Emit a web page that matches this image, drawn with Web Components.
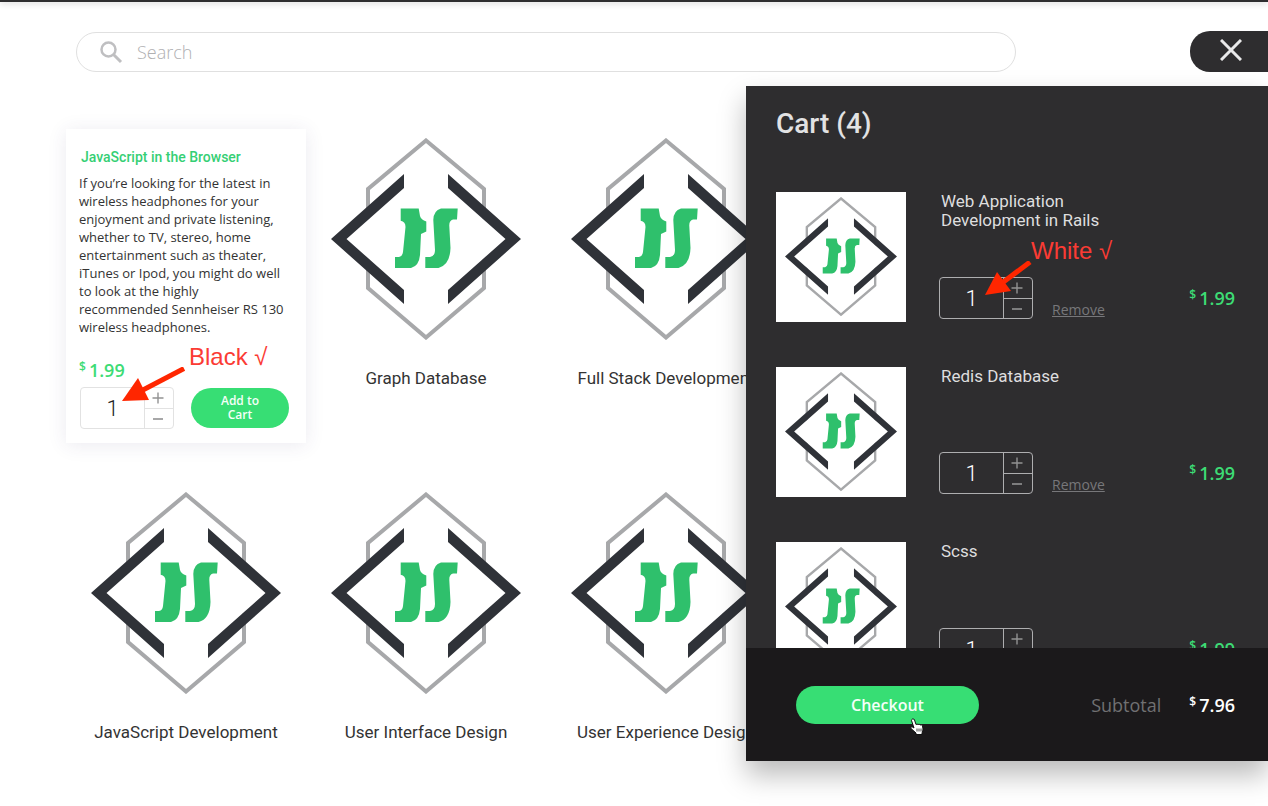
<!DOCTYPE html>
<html lang="en">
<head>
<meta charset="utf-8">
<title>Course store</title>
<style>
  html, body { margin: 0; }
  body { background: #fff; font-family: "Open Sans", "Noto Sans", sans-serif; color: #333; overflow-x: hidden; }
</style>
</head>
<body>
<store-page></store-page>

<script>
const define = (name, html, setup) => {
  const template = document.createElement('template');
  template.innerHTML = '<style>*{box-sizing:border-box}button,input{font-family:inherit;margin:0}</style>' + html;
  customElements.define(name, class extends HTMLElement {
    connectedCallback() {
      if (this.shadowRoot) return;
      this.attachShadow({ mode: 'open' }).append(template.content.cloneNode(true));
      if (setup) setup(this, this.shadowRoot);
    }
  });
};

define('course-logo', `
  <style>:host{display:block} svg{display:block;width:100%}</style>
  <svg viewBox="0 0 190 202" aria-hidden="true">
    <path d="M95 2.5 153 51V150L95 199.5 37 150V51Z" fill="#fff" stroke="#a7a8aa" stroke-width="4"/>
    <path d="M15 101 73 50V152ZM175 101 117 50V152Z" fill="#fff"/>
    <path d="M0 101 73 36V50L15.5 101 73 152V166ZM190 101 117 36V50L174.5 101 117 152V166Z" fill="#2f3238"/>
    <path d="M69.7 70.5H87.7L89 78Q90 81.5 95.3 83.5V93.5L90 96 89 117Q88 128 80 130H64V119H68Q71.5 118.5 72 114L74.5 89Q74.5 83.5 69.7 82.7Z" fill="#2fc06c"/>
    <path d="M110 70.5H126.7L126 81.5H122Q118 82.5 118.3 88L119.5 110Q119 127 107.5 130H94.3V119H99Q104 118 104 112L102.3 82Q102.5 72.5 110 70.5Z" fill="#2fc06c"/>
  </svg>`);

define('price-tag', `
  <style>
    :host{display:flex;align-items:flex-start;gap:3px;font-size:18px;line-height:24px;font-weight:600;color:var(--price,#3ddc75)}
    .sign{font-size:12px;line-height:18px}
  </style>
  <span class="sign">$</span><slot></slot>`);

define('quantity-stepper', `
  <style>
    :host{display:block;flex:none}
    .box{display:grid;grid-template-columns:63px 29px;border:1px solid var(--line,#e2e2e2);border-radius:4px;width:94px;height:42px}
    input{width:63px;min-width:0;border:0;background:none;padding:0;text-align:center;font:22px Roboto,sans-serif;font-weight:300;color:var(--value,#222);outline:0}
    .keys{display:grid;grid-template-rows:1fr 1fr;border-left:1px solid var(--line,#e2e2e2)}
    button{border:0;background:none;padding:0 2px 0 0;display:grid;place-items:center;color:#929293}
    button+button{border-top:1px solid var(--line,#e2e2e2)}
  </style>
  <div class="box">
    <input type="text" inputmode="numeric" value="1" aria-label="Quantity">
    <div class="keys">
      <button type="button" aria-label="Increase"><svg width="12" height="12"><path d="M.5 6H11.5M6 .5V11.5" stroke="currentColor" stroke-width="1.4"/></svg></button>
      <button type="button" aria-label="Decrease"><svg width="12" height="12"><path d="M1 6H11" stroke="currentColor" stroke-width="1.6"/></svg></button>
    </div>
  </div>`, (host, root) => {
    const input = root.querySelector('input');
    const [plus, minus] = root.querySelectorAll('button');
    plus.onclick = () => { input.value = Number(input.value) + 1; };
    minus.onclick = () => { input.value = Math.max(1, Number(input.value) - 1); };
  });

define('pill-button', `
  <style>
    :host{display:block}
    button{width:100%;height:100%;border:0;border-radius:20px;background:#37de74;color:#f4fff8;font-size:inherit;line-height:inherit;font-weight:inherit;padding:0 24px;cursor:pointer}
  </style>
  <button type="button"><slot></slot></button>`);

define('review-note', `
  <style>
    :host{position:absolute;display:grid;grid-template-columns:var(--arrow,64px) auto;white-space:nowrap;font:24px/28px "Liberation Sans",Arial,sans-serif;color:#fb3b34;pointer-events:none}
    span{grid-column:2}
    .arrow{grid-column:1;grid-row:2}
    .arrow ::slotted(svg){display:block}
  </style>
  <span><slot></slot></span><div class="arrow"><slot name="arrow"></slot></div>`);

define('product-card', `
  <style>
    :host{display:block;position:relative;background:#fff;box-shadow:0 2px 18px rgba(60,50,110,.1);padding:18px 14px 14px 13px}
    h2{margin:0 0 7px 2px;font:500 14px/20px Roboto,sans-serif;color:#35cf74}
    p{margin:0 6px 22px 0;font-size:13px;line-height:18px;color:#333}
    .buy{display:flex;justify-content:space-between;align-items:center;margin:5px 3px 0 1px}
    pill-button{width:98px;height:40px;font-size:12px;line-height:14px;font-weight:600}
    review-note{left:56px;top:214px}
  </style>
  <h2><slot name="title"></slot></h2>
  <p><slot></slot></p>
  <price-tag>1.99</price-tag>
  <div class="buy"><quantity-stepper></quantity-stepper><pill-button>Add to Cart</pill-button></div>
  <review-note style="--arrow:67px">Black √
    <svg slot="arrow" width="64" height="36" viewBox="0 0 64 36" style="margin-top:-4px"><path d="M62 1.5 19 24" stroke="#ff2600" stroke-width="5"/><path d="M0 34 16 11 27 33Z" fill="#ff2600"/></svg>
  </review-note>`);

define('product-tile', `
  <style>
    :host{display:flex;flex-direction:column;align-items:center;padding-top:9px}
    course-logo{width:190px}
    a{margin-top:26px;font:17px/24px Roboto,sans-serif;color:#333;text-decoration:none;white-space:nowrap}
  </style>
  <course-logo></course-logo><a href="#"><slot></slot></a>`);

define('store-header', `
  <style>
    :host{display:block}
    .strip{height:2px;background:#2e2d2f;box-shadow:0 1px 6px rgba(0,0,0,.3)}
    .row{display:flex;justify-content:space-between;align-items:center;gap:174px;padding:29px 0 0 76px}
    label{flex:1;height:40px;display:flex;align-items:center;gap:14px;border:1px solid #e0e0e0;border-radius:20px;padding:0 22px}
    input{flex:1;min-width:0;border:0;outline:0;background:none;padding:0;font-size:18px;line-height:24px;font-weight:300;color:#333}
    input::placeholder{color:#b0b0b2;opacity:1}
    button{width:78px;height:41px;border:0;border-radius:20px 0 0 20px;background:#2e2d2f;padding:0 0 3px 3px;display:grid;place-items:center}
  </style>
  <div class="strip"></div>
  <div class="row">
    <label>
      <svg width="24" height="24" viewBox="0 0 24 24" fill="none" stroke="#bfbfc1" aria-hidden="true"><circle cx="9.5" cy="9.5" r="7" stroke-width="2.5"/><path d="M14.5 14.5 22 22" stroke-width="3"/></svg>
      <input type="text" placeholder="Search" aria-label="Search">
    </label>
    <button type="button" aria-label="Close cart"><svg width="22" height="22"><path d="M1 1 21 21M21 1 1 21" stroke="#e9e9ea" stroke-width="3"/></svg></button>
  </div>`);

define('cart-item', `
  <style>
    :host{display:flex;gap:33px;position:relative}
    .thumb{flex:none;width:130px;height:130px;background:#fff;display:grid;place-items:center}
    course-logo{width:112px}
    .info{flex:1;display:flex;flex-direction:column;justify-content:space-between;padding-bottom:2px}
    h3{margin:0 0 0 2px;font:400 17px/19px Roboto,sans-serif;color:#dededf;max-width:180px}
    .row{display:flex;align-items:center}
    a{margin:24px auto 0 19px;font-size:14px;line-height:20px;color:#77777a}
  </style>
  <div class="thumb"><course-logo></course-logo></div>
  <div class="info">
    <h3><slot></slot></h3>
    <div class="row"><quantity-stepper></quantity-stepper><a href="#">Remove</a><price-tag>1.99</price-tag></div>
  </div>
  <slot name="note"></slot>`, (host, root) => {
    if (host.hasAttribute('locked')) root.querySelector('a').replaceWith(Object.assign(document.createElement('span'), { style: 'margin-left:auto' }));
  });

define('shopping-cart', `
  <style>
    :host{display:flex;flex-direction:column;background:#2e2d2f;box-shadow:0 14px 26px rgba(0,0,0,.27);--line:#aeaeb0;--value:#fff}
    h1{margin:0;padding:18px 30px 0;font:500 28px/40px Roboto,sans-serif;color:#e2e2e3}
    .list{flex:1;min-height:0;overflow:hidden;display:flex;flex-direction:column;gap:45px;padding:48px 33px 0 30px}
    cart-item{flex:none}
    footer{flex:none;display:flex;align-items:center;padding:38px 33px 37px 50px;background:#1b191b}
    pill-button{width:183px;height:38px;font-size:16px;line-height:24px;font-weight:600}
    .label{margin:0 28px 0 auto;font-size:18px;line-height:24px;color:#707072}
    footer price-tag{--price:#fff}
    review-note{left:209px;top:45px}
  </style>
  <h1>Cart (4)</h1>
  <div class="list">
    <cart-item>Web Application Development in Rails
      <review-note slot="note" style="--arrow:46px">White √
        <svg slot="arrow" width="48" height="38" viewBox="0 0 48 38" style="margin-top:-4px"><path d="M45 1 17 22" stroke="#ff2600" stroke-width="5"/><path d="M0 34 12 11 26 30Z" fill="#ff2600"/></svg>
      </review-note>
    </cart-item>
    <cart-item>Redis Database</cart-item>
    <cart-item locked>Scss</cart-item>
  </div>
  <footer><pill-button>Checkout</pill-button><span class="label">Subtotal</span><price-tag>7.96</price-tag></footer>`);

define('hand-cursor', `
  <style>:host{position:absolute;pointer-events:none} svg{display:block}</style>
  <svg width="16" height="18" viewBox="0 0 16 18" aria-hidden="true">
    <path d="M3.5 1Q5 .5 5.5 2L7 6.5Q8 5.5 9 6.5 10.5 5.5 11 7 13 6 13.5 8L14 11Q14 13 13 15V16.5H7V15L2 10.5Q1 9 3 8.7L5 10 2.5 2.5Q2.5 1.5 3.5 1Z" fill="#fff" stroke="#111"/>
    <path d="M8 10.5V13.5M10 10.5V13.5M12 10.5V13.5" stroke="#111" stroke-width=".8"/>
  </svg>`);

define('store-page', `
  <style>
    :host{display:block;position:relative;overflow:hidden;min-height:100vh}
    main{display:grid;grid-template-columns:repeat(3,240px);row-gap:40px;padding:57px 66px 0}
    product-card,product-tile{min-height:314px}
    aside{position:absolute;top:86px;right:0;width:522px}
    shopping-cart{max-height:675px}
    hand-cursor{left:163px;bottom:25px}
  </style>
  <store-header></store-header>
  <main>
    <product-card><span slot="title">JavaScript in the Browser</span>If you’re looking for the latest in wireless headphones for your enjoyment and private listening, whether to TV, stereo, home entertainment such as theater, iTunes or Ipod, you might do well to look at the highly recommended Sennheiser RS 130 wireless headphones.</product-card>
    <product-tile>Graph Database</product-tile>
    <product-tile>Full Stack Development</product-tile>
    <product-tile>JavaScript Development</product-tile>
    <product-tile>User Interface Design</product-tile>
    <product-tile>User Experience Design</product-tile>
  </main>
  <aside aria-label="Cart"><shopping-cart></shopping-cart><hand-cursor></hand-cursor></aside>`);
</script>
</body>
</html>
